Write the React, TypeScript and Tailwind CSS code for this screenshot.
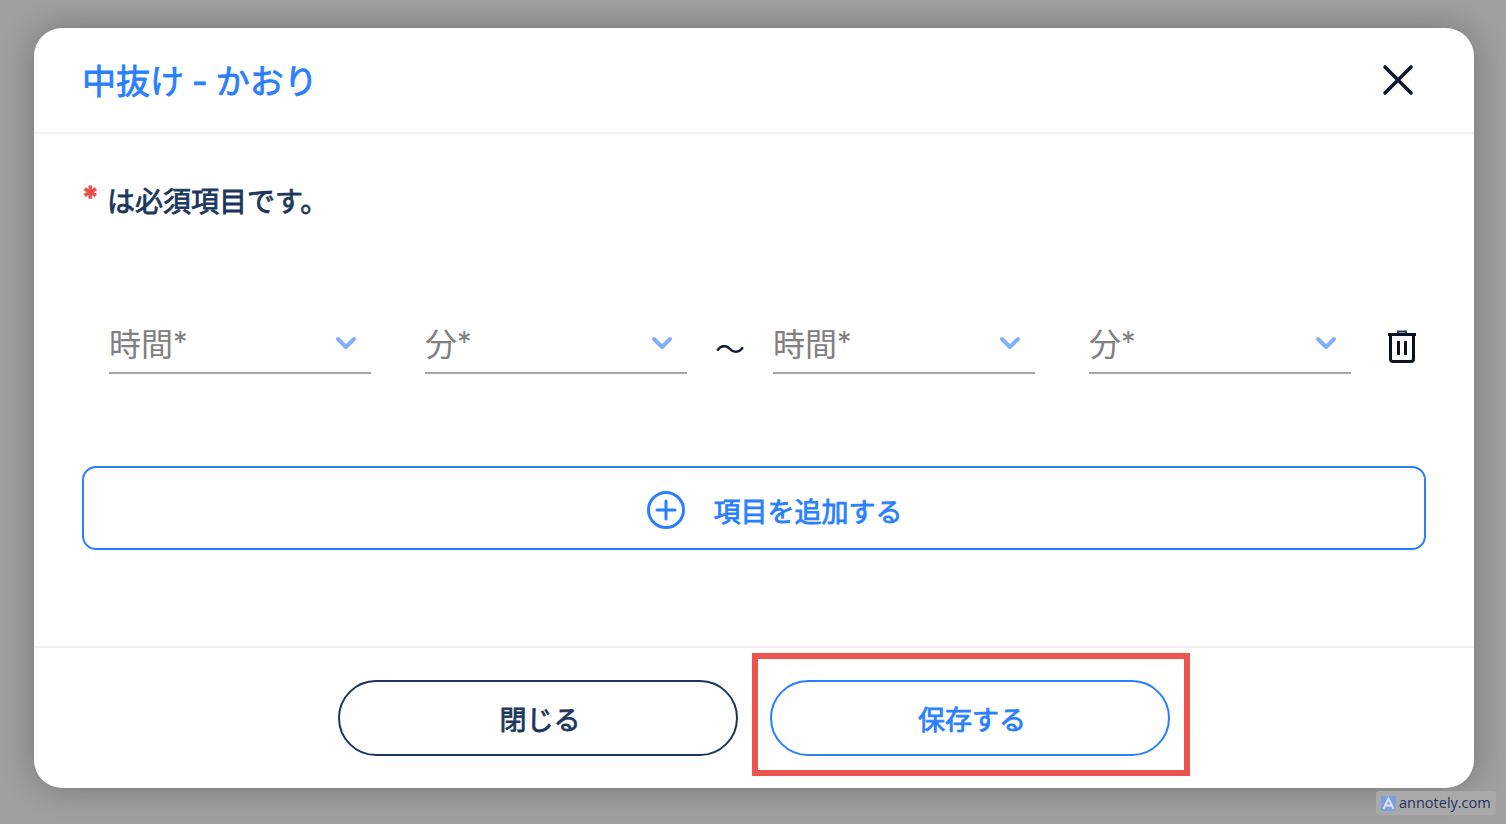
import { ChevronDown } from 'lucide-react';

const fontStack = "font-['Inter','Noto_Sans_CJK_JP',sans-serif]";
// the CJK font has no medium cut installed, so thicken the regular one a little
const mediumText = 'font-normal [-webkit-text-stroke:0.8px_currentColor]';

const TimeSelect = ({ label }: { label: string }) => {
  return (
    <div className="w-[262px] h-[56px] border-b-2 border-[#a6a6a6] flex justify-between pr-[9px]">
      <span className="text-[32px] leading-[54px] text-[#808080]">
        {label.replace('*', '')}
        <span className="relative -top-[4px] text-[29px]">*</span>
      </span>
      <ChevronDown className="w-[32px] h-[32px] mt-[9px] text-[#84aefc]" strokeWidth={3} />
    </div>
  );
};

const TrashIcon = () => (
  <svg width="30" height="34" viewBox="0 0 30 34" fill="none" stroke="#0b1320" strokeWidth="3">
    <path d="M1 5.5h28" />
    <path d="M11 4V2.5h8V4" strokeWidth="2" stroke="#1b365d" />
    <path d="M3.5 5.5V30a2.5 2.5 0 0 0 2.5 2.5h18a2.5 2.5 0 0 0 2.5-2.5V5.5" />
    <path d="M11.5 12v14M18.5 12v14" />
  </svg>
);

const App = () => {
  return (
    <div className={`w-[1506px] h-[824px] overflow-hidden relative bg-[#a0a0a0] pt-[28px] pl-[34px] ${fontStack}`}>
      <div className="w-[1440px] h-[760px] bg-white rounded-[28px] flex flex-col shadow-[0_0_34px_rgba(0,0,0,0.28)]">
        {/* header */}
        <div className="h-[106px] shrink-0 border-b-2 border-[#f2f2f2] flex items-center justify-between pl-[48px] pr-[58px]">
          <h1 className={`text-[34px] text-[#2a7fff] mt-[3px] [word-spacing:-1.5px] ${mediumText}`}>中抜け - かおり</h1>
          <svg width="36" height="36" viewBox="0 0 36 36" fill="none" stroke="#0e1a2b" strokeWidth="3.6" strokeLinecap="round">
            <path d="M5 5l26 26M31 5L5 31" />
          </svg>
        </div>

        {/* body */}
        <div className="flex-1 px-[48px]">
          <p className={`flex mt-[48px] h-[40px] text-[28px] leading-[40px] text-[#1b365d] ${mediumText}`}>
            <span className="w-[25px] text-[#ef4d4d] text-[30px] leading-[30px] font-bold">*</span>
            は必須項目です。
          </p>
          <div className="flex items-start mt-[96px] pl-[27px]">
            <TimeSelect label="時間*" />
            <div className="w-[54px]" />
            <TimeSelect label="分*" />
            <span className="w-[86px] text-center text-[30px] leading-[62px] text-[#0e1a2b]">〜</span>
            <TimeSelect label="時間*" />
            <div className="w-[54px]" />
            <TimeSelect label="分*" />
            <div className="ml-[36px] mt-[11px]">
              <TrashIcon />
            </div>
          </div>
          <button className={`mt-[86px] w-[1344px] h-[84px] border-2 border-[#2a7fff] rounded-[14px] flex items-center justify-center pl-[40px] text-[27px] text-[#2a7fff] ${mediumText}`}>
            <svg width="40" height="40" viewBox="0 0 40 40" fill="none" stroke="#2a7fff" strokeWidth="3" strokeLinecap="round" className="mt-[4px] mr-[28px]">
              <circle cx="20" cy="20" r="17.5" />
              <path d="M20 11v18M11 20h18" />
            </svg>
            <span className="pt-[10px]">項目を追加する</span>
          </button>
        </div>

        {/* footer */}
        <div className="h-[142px] shrink-0 border-t-2 border-[#f2f2f2] flex justify-center gap-[32px] pt-[32px]">
          <button className={`w-[400px] h-[76px] rounded-full border-2 border-[#1b365d] pt-[6px] pl-[4px] text-[27px] text-[#1b365d] ${mediumText}`}>閉じる</button>
          <button className={`w-[400px] h-[76px] rounded-full border-2 border-[#2a7fff] pt-[6px] pl-[4px] text-[27px] text-[#2a7fff] ${mediumText}`}>保存する</button>
        </div>
      </div>

      {/* annotation */}
      <div className="absolute left-[752px] top-[653px] w-[438px] h-[123px] border-[6px] border-[#ef5350]" />

      {/* watermark */}
      <div className="absolute left-[1376px] top-[791px] w-[120px] h-[24px] rounded-[3px] bg-[#a9a9a9] flex items-center pl-[5px] gap-[3px]">
        <svg width="15" height="15" viewBox="0 0 15 15">
          <rect width="15" height="15" fill="#7a9fe0" />
          <path d="M2.5 13L7.5 2.5 12.5 13M5 9.5h5" fill="none" stroke="#dfe3ee" strokeWidth="2" />
        </svg>
        <span className="font-['Open_Sans',sans-serif] text-[14.5px] text-[#21345c]">annotely.com</span>
      </div>
    </div>
  );
};

export default App;
